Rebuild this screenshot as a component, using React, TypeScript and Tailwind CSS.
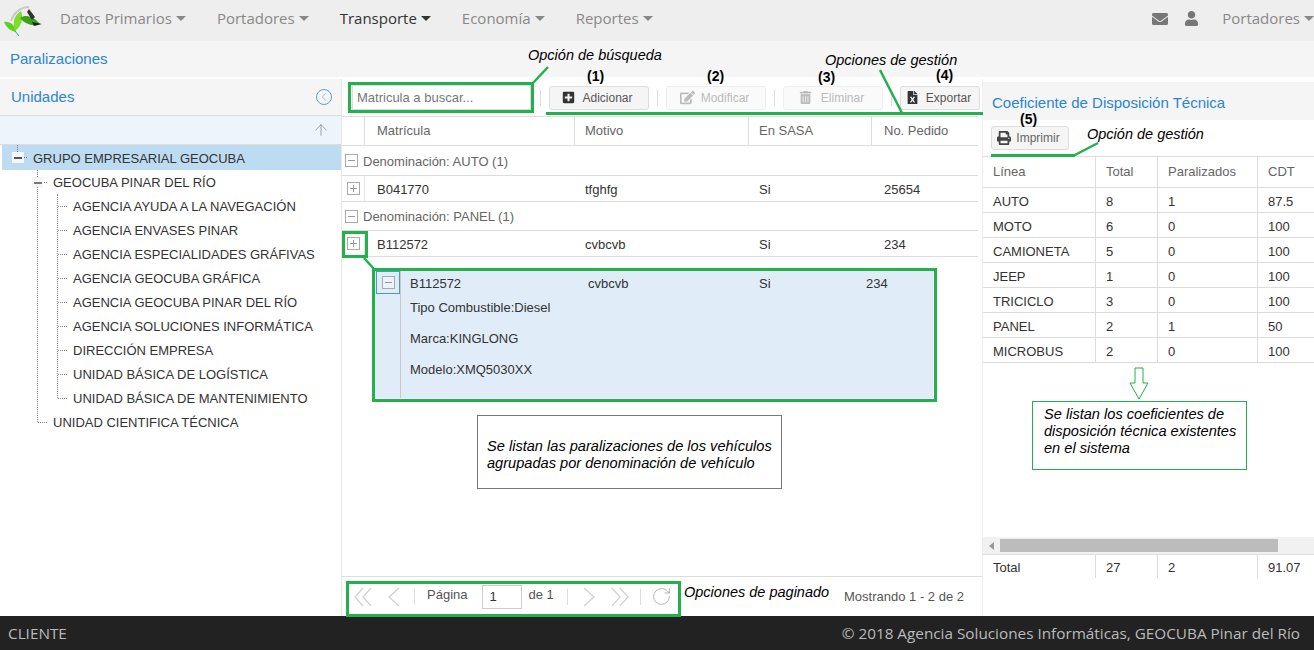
import React from 'react';
import { RotateCw, ChevronLeft, ArrowUp } from 'lucide-react';
import { FaEnvelope, FaUser, FaPlusSquare, FaEdit, FaTrashAlt, FaFileExcel, FaPrint } from 'react-icons/fa';

const navItems = ['Datos Primarios', 'Portadores', 'Transporte', 'Economía', 'Reportes'];

const treeChildren = [
  'AGENCIA AYUDA A LA NAVEGACIÓN',
  'AGENCIA ENVASES PINAR',
  'AGENCIA ESPECIALIDADES GRÁFIVAS',
  'AGENCIA GEOCUBA GRÁFICA',
  'AGENCIA GEOCUBA PINAR DEL RÍO',
  'AGENCIA SOLUCIONES INFORMÁTICA',
  'DIRECCIÓN EMPRESA',
  'UNIDAD BÁSICA DE LOGÍSTICA',
  'UNIDAD BÁSICA DE MANTENIMIENTO',
];

const cdtRows = [
  ['AUTO', '8', '1', '87.5'],
  ['MOTO', '6', '0', '100'],
  ['CAMIONETA', '5', '0', '100'],
  ['JEEP', '1', '0', '100'],
  ['TRICICLO', '3', '0', '100'],
  ['PANEL', '2', '1', '50'],
  ['MICROBUS', '2', '0', '100'],
];

const Caret = () => <span className="ml-1 inline-block h-0 w-0 border-x-[5px] border-t-[5px] border-x-transparent border-t-current align-[3px]" />;

const BoxIcon: React.FC<{ open?: boolean }> = ({ open }) => (
  <span className="relative block h-[13px] w-[13px] border border-[#aaa] bg-white/40">
    <span className="absolute left-[2px] top-[5px] h-px w-[7px] bg-[#999]" />
    {!open && <span className="absolute left-[5px] top-[2px] h-[7px] w-px bg-[#999]" />}
  </span>
);

const PagerArrow: React.FC<{ d: string; w: number }> = ({ d, w }) => (
  <svg width={w} height="20" viewBox={`0 0 ${w} 20`} className="shrink-0">
    <path d={d} stroke="#d0d0d0" strokeWidth="1.2" fill="none" />
  </svg>
);

const ToolButton: React.FC<{ icon: React.ReactNode; label: string; disabled?: boolean; w: string; gap: string }> = ({ icon, label, disabled, w, gap }) => (
  <div className={`flex h-[24px] items-center justify-center rounded-[3px] border pr-[3px] text-[12px] ${w} ${gap} ${disabled ? 'border-[#eee] bg-[#fafafa] text-[#bbb]' : 'border-[#ddd] bg-[#f5f5f5] text-[#555]'}`}>
    <span className={disabled ? 'text-[#bbb]' : 'text-[#333]'}>{icon}</span>
    {label}
  </div>
);

const Sep = () => <span className="h-[16px] w-px bg-[#ddd]" />;

const Row: React.FC<{ m: string; v: string; s: string; p: string }> = ({ m, v, s, p }) => (
  <div className="grid h-[26px] grid-cols-[22px_210px_174px_123px_1fr] items-center border-b border-[#ddd] text-[#333]">
    <span className="flex h-full items-center justify-center"><BoxIcon /></span>
    <span className="flex h-full items-center border-l border-[#e4e4e4] pl-[12px] pt-[2px]">{m}</span>
    <span className="pl-[11px] pt-[2px]">{v}</span>
    <span className="pl-[11px] pt-[2px]">{s}</span>
    <span className="pl-[13px] pt-[2px]">{p}</span>
  </div>
);

const GroupRow: React.FC<{ label: string; h: string }> = ({ label, h }) => (
  <div className={`flex items-center gap-[5px] border-b border-[#ddd] pl-[3px] text-[#666] ${h}`}>
    <BoxIcon open />
    <span className="pt-[2px]">{label}</span>
  </div>
);

const Note: React.FC<{ className: string; children: React.ReactNode }> = ({ className, children }) => (
  <div className={`absolute text-[14.5px] italic leading-[17px] text-black ${className}`}>{children}</div>
);

const Num: React.FC<{ className: string; children: React.ReactNode }> = ({ className, children }) => (
  <div className={`absolute text-[14px] font-bold leading-[16px] text-black ${className}`}>{children}</div>
);

const Frame: React.FC<{ className: string }> = ({ className }) => (
  <div className={`pointer-events-none absolute border-[3px] border-[#22b14c] ${className}`} />
);

const Bar: React.FC<{ className: string }> = ({ className }) => (
  <div className={`absolute h-[3px] bg-[#22b14c] ${className}`} />
);

export default function App() {
  return (
    <div className="relative flex h-[650px] w-[1314px] flex-col overflow-hidden bg-white font-['Liberation_Sans',sans-serif] text-[13px]">
      {/* top nav */}
      <header className="flex h-[41px] shrink-0 items-center bg-[#eeeeee] font-['Open_Sans',sans-serif] text-[15px] text-[#888]">
        <svg width="44" height="36" viewBox="0 0 44 36" className="ml-[2px] shrink-0">
          <path d="M9 18 C12 9 19 4 27 4" stroke="#c9c9c9" strokeWidth="2" fill="none" />
          <path d="M2 19 C8 18 13 22 14 29 C8 28 4 24 2 19Z" fill="#5fd01f" />
          <path d="M13 28 C10 20 12 12 19 8 C22 15 19 24 13 28Z" fill="#7fdc2e" />
          <path d="M18 15 C25 10 33 15 38 21 C31 24 23 21 18 15Z" fill="#3fa01a" />
          <path d="M27 6 L33 14 L30 17 L25 9Z" fill="#333" />
          <path d="M30 19 L40 21 L32 23Z" fill="#222" />
          <path d="M13 28 L17 33" stroke="#3a9" strokeWidth="1" />
        </svg>
        <nav className="ml-[14px] flex gap-[31px] pb-[4px]">
          {navItems.map(n => (
            <span key={n} className={n === 'Transporte' ? 'text-[#333]' : ''}>{n}<Caret /></span>
          ))}
        </nav>
        <div className="ml-auto flex items-center pb-[4px]">
          <FaEnvelope className="mr-[16px] text-[16px] text-[#777]" />
          <FaUser className="mr-[23px] text-[15px] text-[#777]" />
          <span>Portadores<Caret /></span>
        </div>
      </header>

      {/* breadcrumb */}
      <div className="flex h-[36px] shrink-0 items-center bg-[#f5f5f5] pl-[10px] text-[15px] text-[#2a86d1]">Paralizaciones</div>

      {/* panels */}
      <main className="mt-[2px] flex min-h-0 flex-1">
        {/* tree */}
        <aside className="flex w-[342px] shrink-0 flex-col border-r border-[#e8e8e8]">
          <div className="flex h-[37px] shrink-0 items-center justify-between border-b border-[#ddd] bg-[#f5f5f5] pl-[11px] pr-[9px] text-[15px] text-[#2a86d1]">
            Unidades
            <span className="flex h-[16px] w-[16px] items-center justify-center rounded-full border border-[#5b9fd6] text-[#5b9fd6]">
              <ChevronLeft size={14} strokeWidth={1} />
            </span>
          </div>
          <div className="flex h-[29px] shrink-0 items-center justify-end border-b border-[#ddd] bg-[#edf4fb] pr-[11px] text-[#888]">
            <ArrowUp size={18} strokeWidth={1} />
          </div>
          <div className="relative text-[#333]">
            <div className="ml-[2px] flex h-[25px] items-center bg-[#bedcf1] pl-[31px] pt-[2px]">GRUPO EMPRESARIAL GEOCUBA</div>
            {/* root toggle */}
            <span className="absolute left-[12px] top-[7px] h-[11px] w-[12px] bg-white/80" />
            <span className="absolute left-[14px] top-[12px] h-[2px] w-[8px] bg-[#555]" />
            <span className="absolute left-[24px] top-[12px] w-[3px] border-t border-dotted border-[#777]" />
            <span className="absolute left-[17px] top-0 h-[7px] border-l border-dotted border-[#777]" />
            <div className="relative flex h-[24px] items-center pl-[53px] pt-[2px]">
              GEOCUBA PINAR DEL RÍO
              <span className="absolute left-[32px] top-[7px] h-[11px] w-[11px] bg-[#f5f5f5]" />
              <span className="absolute left-[34px] top-[12px] h-[2px] w-[8px] bg-[#777]" />
              <span className="absolute left-[44px] top-[12px] w-[3px] border-t border-dotted border-[#777]" />
              <span className="absolute left-[37px] top-0 h-[7px] border-l border-dotted border-[#777]" />
            </div>
            {treeChildren.map(t => (
              <div key={t} className="relative flex h-[24px] items-center pl-[73px] pt-[2px]">
                {t}
                <span className="absolute left-[58px] top-[12px] w-[9px] border-t border-dotted border-[#888]" />
              </div>
            ))}
            <div className="relative flex h-[24px] items-center pl-[53px] pt-[2px]">
              UNIDAD CIENTIFICA TÉCNICA
              <span className="absolute left-[38px] top-[12px] w-[9px] border-t border-dotted border-[#888]" />
            </div>
            <span className="absolute left-[37px] top-[42px] h-[235px] border-l border-dotted border-[#888]" />
            <span className="absolute left-[57px] top-[49px] h-[204px] border-l border-dotted border-[#888]" />
          </div>
        </aside>

        {/* paralizaciones */}
        <section className="flex w-[640px] shrink-0 flex-col">
          <div className="flex h-[37px] shrink-0 items-center pl-[10px]">
            <div className="flex h-[25px] w-[179px] items-center border border-[#ddd] pl-[4px] text-[#777]">Matricula a buscar...</div>
            <div className="ml-[9px] flex items-center gap-[8px]">
              <Sep />
              <ToolButton w="w-[100px]" gap="gap-[7px]" icon={<FaPlusSquare size={13} />} label="Adicionar" />
              <Sep />
              <ToolButton w="w-[100px]" gap="gap-[6px]" disabled icon={<FaEdit size={15} />} label="Modificar" />
              <Sep />
              <ToolButton w="w-[100px]" gap="gap-[9px]" disabled icon={<FaTrashAlt size={13} />} label="Eliminar" />
              <Sep />
              <ToolButton w="w-[80px]" gap="gap-[7px]" icon={<FaFileExcel size={13} />} label="Exportar" />
            </div>
          </div>
          <div className="mr-[4px] min-h-0 flex-1 border-t border-[#ddd]">
            <div className="grid h-[29px] grid-cols-[22px_210px_174px_123px_1fr] items-center border-b border-[#ddd] text-[#666]">
              <span />
              <span className="flex h-full items-center border-l border-[#ddd] pl-[12px]">Matrícula</span>
              <span className="flex h-full items-center border-l border-[#ddd] pl-[10px]">Motivo</span>
              <span className="flex h-full items-center border-l border-[#ddd] pl-[10px]">En SASA</span>
              <span className="flex h-full items-center border-l border-[#ddd] pl-[12px]">No. Pedido</span>
            </div>
            <GroupRow h="h-[30px]" label="Denominación: AUTO (1)" />
            <Row m="B041770" v="tfghfg" s="Si" p="25654" />
            <GroupRow h="h-[29px]" label="Denominación: PANEL (1)" />
            <Row m="B112572" v="cvbcvb" s="Si" p="234" />
            <div className="ml-[33px] mt-[13px] flex h-[128px] w-[558px] bg-[#e0ecf7] text-[#333]">
              <div className="w-[26px] shrink-0 border-r border-[#c8c8c8]">
                <span className="ml-px mt-px flex h-[23px] w-[24px] items-center justify-center border border-[#4a97d2]"><BoxIcon open /></span>
              </div>
              <div className="flex-1 pl-[9px]">
                <div className="grid h-[26px] grid-cols-[178px_171px_107px_1fr] items-center pt-[2px]">
                  <span>B112572</span><span>cvbcvb</span><span>Si</span><span>234</span>
                </div>
                <p className="mt-[4px] leading-[16px]">Tipo Combustible:Diesel</p>
                <p className="mt-[15px] leading-[16px]">Marca:KINGLONG</p>
                <p className="mt-[15px] leading-[16px]">Modelo:XMQ5030XX</p>
              </div>
            </div>
          </div>
          {/* pager */}
          <div className="flex h-[40px] shrink-0 items-center border-t border-[#ddd] pl-[12px] text-[#555]">
            <PagerArrow w={18} d="M9 1 L1 10 L9 19 M17 1 L9 10 L17 19" />
            <span className="ml-[16px]"><PagerArrow w={12} d="M11 1 L1 10 L11 19" /></span>
            <span className="ml-[14px] h-[16px] w-px bg-[#ddd]" />
            <span className="mb-[4px] ml-[12px]">Página</span>
            <span className="ml-[15px] flex h-[24px] w-[40px] items-center border border-[#ccc] pl-[6px] text-[#333]">1</span>
            <span className="mb-[4px] ml-[6px]">de 1</span>
            <span className="ml-[13px] h-[16px] w-px bg-[#ddd]" />
            <span className="ml-[15px]"><PagerArrow w={12} d="M1 1 L11 10 L1 19" /></span>
            <span className="ml-[16px]"><PagerArrow w={18} d="M1 1 L9 10 L1 19 M9 1 L17 10 L9 19" /></span>
            <span className="ml-[11px] h-[16px] w-px bg-[#ddd]" />
            <RotateCw size={21} strokeWidth={1} className="ml-[10px] text-[#aaa]" />
            <span className="ml-auto mr-[18px] text-[#555]">Mostrando 1 - 2 de 2</span>
          </div>
        </section>

        {/* CDT */}
        <aside className="flex min-w-0 flex-1 flex-col border-l border-[#eee] pb-[38px]">
          <div className="mt-[3px] flex h-[38px] shrink-0 items-center bg-[#f5f5f5] pl-[9px] pt-[4px] text-[15px] text-[#2a86d1]">Coeficiente de Disposición Técnica</div>
          <div className="flex h-[37px] shrink-0 items-center border-b border-[#ddd] pl-[8px]">
            <div className="flex h-[24px] w-[78px] items-center justify-center gap-[5px] rounded-[3px] border border-[#ddd] bg-[#f5f5f5] pr-[3px] text-[12px] text-[#666]">
              <FaPrint size={14} className="text-[#444]" />
              Imprimir
            </div>
          </div>
          <div className="grid h-[31px] shrink-0 grid-cols-[112px_62px_100px_1fr] items-center border-b border-[#ddd] text-[#666]">
            <span className="pl-[10px]">Línea</span>
            <span className="flex h-full items-center border-l border-[#ddd] pl-[10px]">Total</span>
            <span className="flex h-full items-center border-l border-[#ddd] pl-[10px]">Paralizados</span>
            <span className="flex h-full items-center border-l border-[#ddd] pl-[10px]">CDT</span>
          </div>
          {cdtRows.map(r => (
            <div key={r[0]} className="grid h-[25px] shrink-0 grid-cols-[112px_62px_100px_1fr] items-center border-b border-[#ddd] text-[#333]">
              <span className="pl-[10px] pt-[3px]">{r[0]}</span>
              <span className="flex h-full items-center border-l border-[#ddd] pl-[10px] pt-[3px]">{r[1]}</span>
              <span className="flex h-full items-center border-l border-[#ddd] pl-[10px] pt-[3px]">{r[2]}</span>
              <span className="flex h-full items-center border-l border-[#ddd] pl-[10px] pt-[3px]">{r[3]}</span>
            </div>
          ))}
          <div className="flex-1" />
          <div className="flex h-[17px] shrink-0 items-center bg-[#f1f1f1]">
            <span className="ml-[6px] h-0 w-0 border-y-[4px] border-r-[5px] border-y-transparent border-r-[#999]" />
            <span className="ml-[6px] h-[13px] w-[278px] bg-[#bcbcbc]" />
          </div>
          <div className="grid h-[24px] shrink-0 grid-cols-[112px_62px_100px_1fr] items-center border-t border-[#ddd] text-[#333]">
            <span className="pl-[10px] pt-[2px]">Total</span>
            <span className="flex h-full items-center border-l border-[#ddd] pl-[10px] pt-[2px]">27</span>
            <span className="flex h-full items-center border-l border-[#ddd] pl-[10px] pt-[2px]">2</span>
            <span className="flex h-full items-center border-l border-[#ddd] pl-[10px] pt-[2px]">91.07</span>
          </div>
        </aside>
      </main>

      {/* footer */}
      <footer className="flex h-[34px] shrink-0 items-center justify-between bg-[#222222] pl-[8px] pr-[14px] font-['Open_Sans',sans-serif] text-[15.3px] text-[#bbb]">
        <span>CLIENTE</span>
        <span>© 2018 Agencia Soluciones Informáticas, GEOCUBA Pinar del Río</span>
      </footer>

      {/* annotations over the screenshot */}
      <Frame className="left-[348px] top-[82px] h-[31px] w-[186px]" />
      <Bar className="left-[546px] top-[112px] w-[437px]" />
      <Bar className="left-[991px] top-[154px] w-[84px]" />
      <Frame className="left-[342px] top-[231px] h-[27px] w-[26px]" />
      <Frame className="left-[372px] top-[268px] h-[134px] w-[565px]" />
      <Frame className="left-[346px] top-[581px] h-[36px] w-[335px]" />
      <svg className="pointer-events-none absolute left-0 top-0" width="1314" height="650">
        <path d="M533 83 L548 67 M880 70 L902 113 M364 258 L375 270 M1073 156 L1098 143" stroke="#22b14c" strokeWidth="2.5" fill="none" />
      </svg>
      <Note className="left-[528px] top-[47px]">Opción de búsqueda</Note>
      <Note className="left-[825px] top-[52px]">Opciones de gestión</Note>
      <Note className="left-[1087px] top-[126px]">Opción de gestión</Note>
      <Note className="left-[684px] top-[584px]">Opciones de paginado</Note>
      <Num className="left-[587px] top-[68px]">(1)</Num>
      <Num className="left-[707px] top-[68px]">(2)</Num>
      <Num className="left-[818px] top-[69px]">(3)</Num>
      <Num className="left-[936px] top-[67px]">(4)</Num>
      <Num className="left-[1020px] top-[111px]">(5)</Num>
      <div className="absolute left-[477px] top-[415px] flex h-[74px] w-[305px] items-center border border-[#777] bg-white pl-[9px] pt-[6px] text-[14.6px] italic leading-[17px] text-black">
        <span>Se listan las paralizaciones de los vehículos<br />agrupadas por denominación de vehículo</span>
      </div>
      <div className="absolute left-[1032px] top-[401px] h-[69px] w-[215px] border border-[#22b14c] bg-white pl-[11px] pt-[4px] text-[14.6px] italic leading-[17px] text-black">
        Se listan los coeficientes de<br />disposición técnica existentes<br />en el sistema
      </div>
      <svg className="absolute left-[1129px] top-[367px]" width="20" height="34" viewBox="0 0 20 34">
        <path d="M6 1 H14 V16 H19 L10 32 L1 16 H6Z" fill="white" stroke="#22b14c" strokeWidth="1" />
      </svg>
    </div>
  );
}
